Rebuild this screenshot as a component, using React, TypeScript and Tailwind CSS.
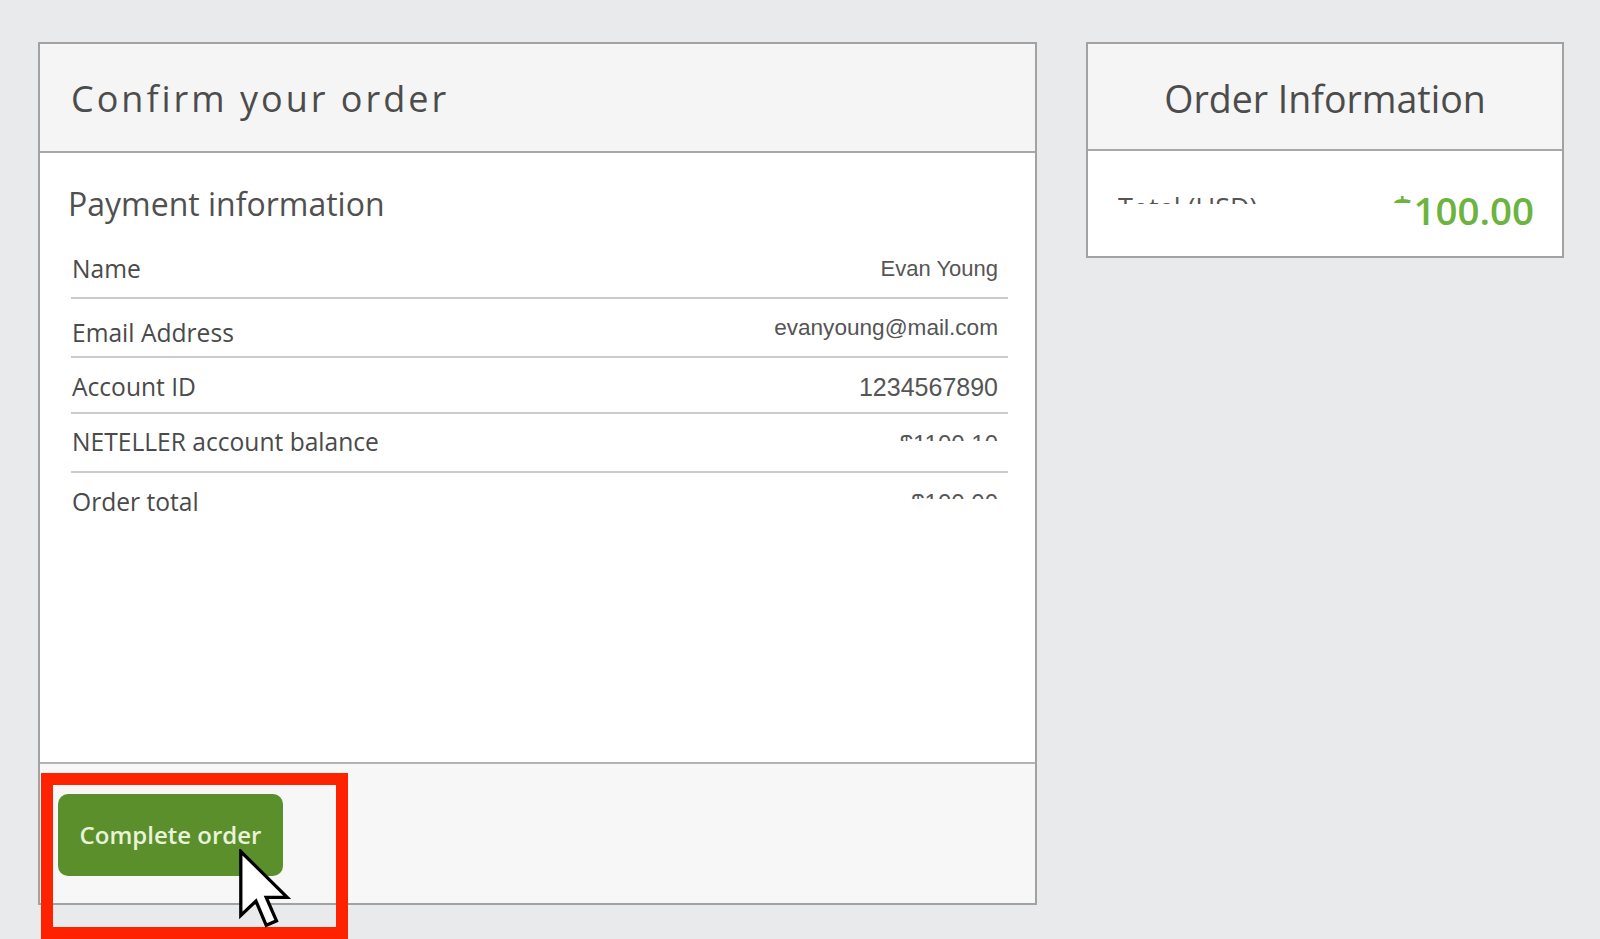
import React from "react";

const OPEN = { fontFamily: '"Open Sans", "Noto Sans", sans-serif' };
const ARIAL = { fontFamily: '"Liberation Sans", Arial, sans-serif' };

function Cursor() {
  return (
    <svg width="54" height="80" viewBox="0 0 13 19.5" className="block">
      <path
        d="M0.6 0.6 L0.6 16.2 L4.3 12.7 L6.8 18.6 L9.3 17.5 L6.8 11.8 L11.9 11.8 Z"
        fill="#ffffff"
        stroke="#000000"
        strokeWidth="0.8"
        strokeLinejoin="miter"
      />
    </svg>
  );
}

export default function App() {
  return (
    <div className="relative min-h-[939px] w-full overflow-hidden bg-[#e9eaec] pt-[42px] pl-[38px] flex items-start gap-[49px]">
      {/* Left panel */}
      <div className="w-[999px] h-[863px] border-2 border-[#a2a2a2] bg-white flex flex-col">
        <div className="h-[109px] shrink-0 bg-[#f5f5f5] border-b-2 border-[#a8a8a8] flex items-center pl-[31px] pt-[3px]">
          <h1 style={OPEN} className="text-[36px] leading-[44px] font-medium tracking-[3px] text-[#4c4c4c]">
            Confirm your order
          </h1>
        </div>
        <div className="flex-1 pt-[29px] pl-[28px] pr-[27px]">
          <h2 style={OPEN} className="text-[32px] leading-[44px] font-medium text-[#505050]">
            Payment information
          </h2>
          <div className="mt-[15px] pl-[3px]">
            {/* Name */}
            <div className="h-[58px] border-b-2 border-[#cbcbcb] flex justify-between pr-[10px]">
              <span style={OPEN} className="mt-[12px] pl-[1px] text-[24.6px] leading-[32px] text-[#4a4a4a]">Name</span>
              <span style={ARIAL} className="mt-[14px] text-[22px] leading-[28px] text-[#555555]">Evan Young</span>
            </div>
            {/* Email */}
            <div className="h-[59px] border-b-2 border-[#cbcbcb] flex justify-between pr-[10px]">
              <span style={OPEN} className="mt-[18px] pl-[1px] text-[24.6px] leading-[32px] text-[#4a4a4a]">Email Address</span>
              <span style={ARIAL} className="mt-[15px] text-[22.6px] leading-[28px] text-[#555555]">evanyoung@mail.com</span>
            </div>
            {/* Account ID */}
            <div className="h-[56px] border-b-2 border-[#cbcbcb] flex justify-between pr-[10px]">
              <span style={OPEN} className="mt-[13px] pl-[1px] text-[24.6px] leading-[32px] text-[#4a4a4a]">Account ID</span>
              <span style={ARIAL} className="mt-[15px] text-[25px] leading-[28px] text-[#555555]">1234567890</span>
            </div>
            {/* Balance */}
            <div className="h-[59px] border-b-2 border-[#cbcbcb] flex justify-between pr-[10px]">
              <span style={OPEN} className="mt-[12px] pl-[1px] text-[24.6px] leading-[32px] text-[#4a4a4a]">NETELLER account balance</span>
              <span style={ARIAL} className="relative inline-block self-start mt-[16px] text-[24px] leading-[28px] text-[#555555]">
                $1100.10
                <span className="absolute left-[-4px] right-[-4px] top-[11px] h-[24px] bg-white" />
              </span>
            </div>
            {/* Order total */}
            <div className="h-[58px] flex justify-between pr-[10px]">
              <span style={OPEN} className="mt-[13px] pl-[1px] text-[24.6px] leading-[32px] text-[#4a4a4a]">Order total</span>
              <span style={ARIAL} className="relative inline-block self-start mt-[16px] text-[24px] leading-[28px] text-[#555555]">
                $100.00
                <span className="absolute left-[-4px] right-[-4px] top-[10px] h-[24px] bg-white" />
              </span>
            </div>
          </div>
        </div>
        <div className="h-[141px] shrink-0 bg-[#f7f7f7] border-t-2 border-[#b4b4b4] pt-[30px] pl-[18px]">
          <button
            style={OPEN}
            className="w-[225px] h-[82px] rounded-[10px] bg-[#5b8f2b] text-[#e8f3da] text-[24px] font-semibold flex items-center justify-center"
          >
            Complete order
          </button>
        </div>
      </div>

      {/* Right panel */}
      <div className="w-[478px] h-[216px] border-2 border-[#a2a2a2] bg-white flex flex-col">
        <div className="h-[107px] shrink-0 bg-[#f5f5f5] border-b-2 border-[#a8a8a8] flex items-center justify-center pt-[4px]">
          <h2 style={OPEN} className="text-[37.5px] leading-[44px] font-medium text-[#4c4c4c]">
            Order Information
          </h2>
        </div>
        <div className="flex-1 flex justify-between items-start pl-[30px] pr-[28px]">
          <span style={OPEN} className="relative inline-block mt-[39px] text-[27px] leading-[36px] text-[#555555]">
            Total (USD)
            <span className="absolute left-[-4px] right-[-4px] top-[14px] h-[30px] bg-white" />
          </span>
          <span style={OPEN} className="mt-[37px] flex text-[38.5px] leading-[44px] font-semibold text-[#6db33f]">
            <span className="relative inline-block">
              $
              <span className="absolute left-[-4px] right-0 top-[15px] h-[36px] bg-white" />
            </span>
            <span>100.00</span>
          </span>
        </div>
      </div>

      {/* Red annotation box */}
      <div className="absolute left-[41px] top-[773px] w-[307px] h-[166px] border-[12px] border-[#ff2200] pointer-events-none" />

      {/* Mouse cursor */}
      <div className="absolute left-[238px] top-[849px] pointer-events-none">
        <Cursor />
      </div>
    </div>
  );
}
